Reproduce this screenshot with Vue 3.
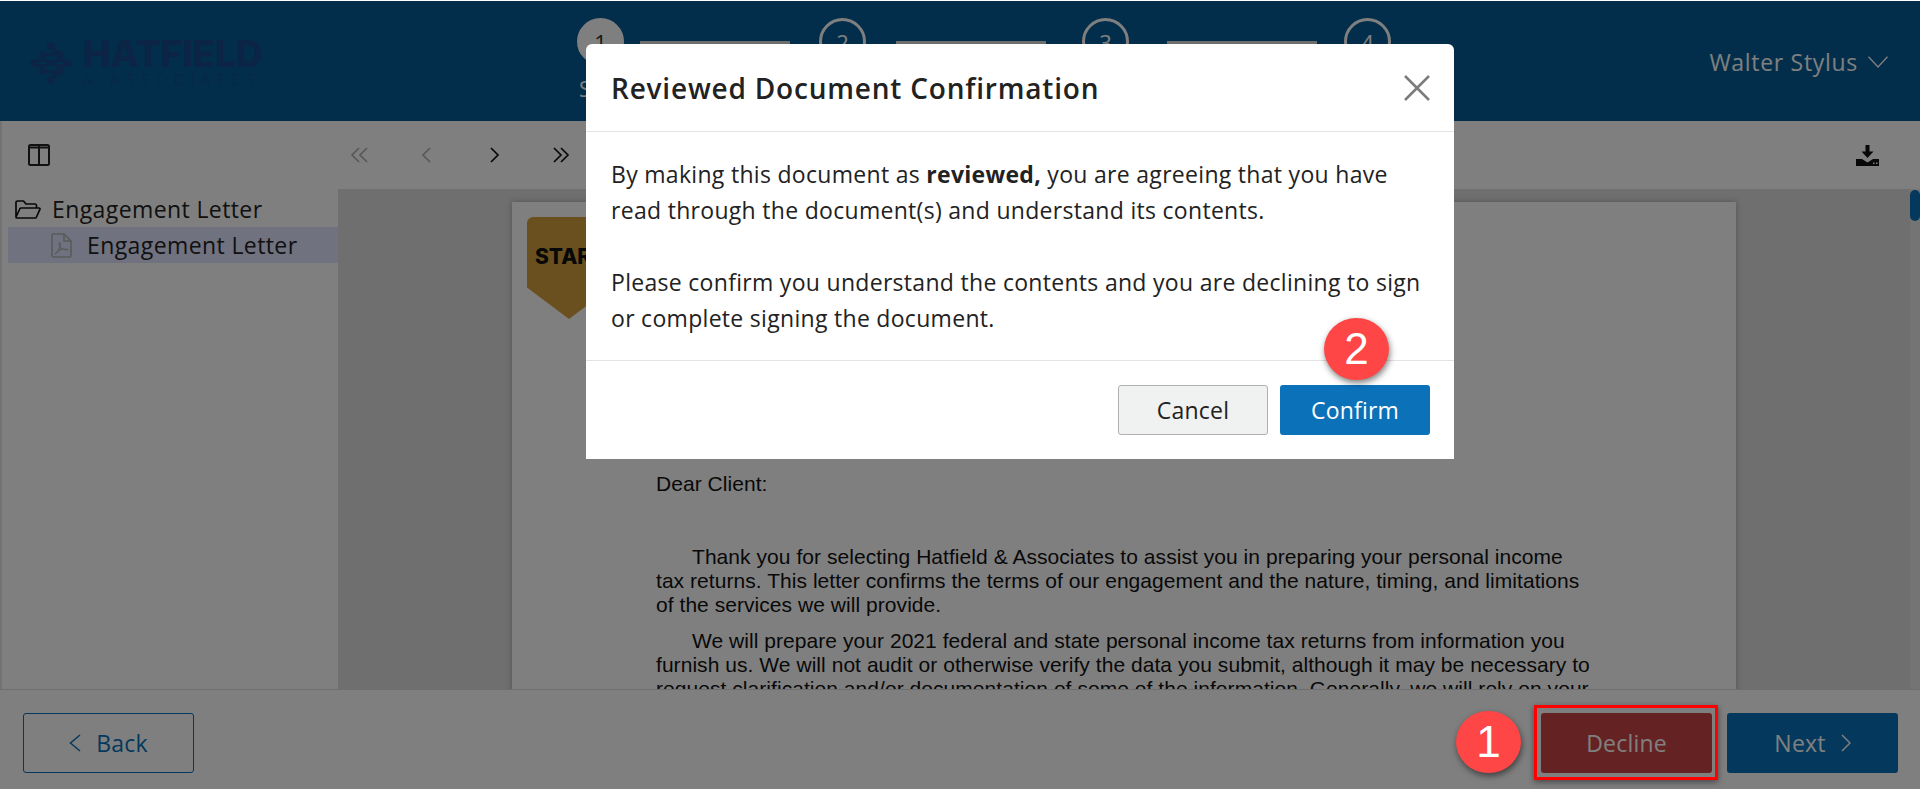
<script setup>
const paragraphs = [
  { lines: ['Thank you for selecting Hatfield & Associates to assist you in preparing your personal income', 'tax returns. This letter confirms the terms of our engagement and the nature, timing, and limitations', 'of the services we will provide.'] },
  { lines: ['We will prepare your 2021 federal and state personal income tax returns from information you', 'furnish us. We will not audit or otherwise verify the data you submit, although it may be necessary to', 'request clarification and/or documentation of some of the information. Generally, we will rely on your'] }
]
</script>

<template>
  <div class="app">
    <header class="header">
      <div class="logo">
        <svg class="logo-mark" viewBox="0 0 42 42" width="42" height="42" fill="none" stroke="#18488a" stroke-width="3" stroke-linecap="round">
          <path d="M21 4C21 9 30 8 30 13M13 13C18 13 24 10 30 13M4 21C10 16 15 18 21 21C27 24 32 26 38 21M4 21C10 26 15 24 21 21C27 18 32 16 38 21M13 29C18 29 24 32 30 29M21 38C21 33 30 34 30 29" />
          <g fill="#18488a" stroke="none">
            <circle cx="21" cy="4" r="3.800" /><circle cx="21" cy="38" r="3.800" /><circle cx="13" cy="13" r="3.800" /><circle cx="30" cy="13" r="3.800" />
            <circle cx="13" cy="29" r="3.800" /><circle cx="30" cy="29" r="3.800" /><circle cx="4" cy="21" r="3.800" /><circle cx="38" cy="21" r="3.800" />
          </g>
        </svg>
        <div class="logo-text">
          <div class="logo-name">HATFIELD</div>
          <div class="logo-sub">&amp; ASSOCIATES</div>
        </div>
      </div>
      <div class="steps">
        <div class="step active"><span class="dot">1</span><span class="step-label">Sign</span></div>
        <span class="bar bar-a"></span>
        <div class="step"><span class="dot">2</span></div>
        <span class="bar bar-b"></span>
        <div class="step"><span class="dot">3</span></div>
        <span class="bar bar-c"></span>
        <div class="step"><span class="dot">4</span></div>
      </div>
      <div class="user">
        <span>Walter Stylus</span>
        <svg width="20" height="12" viewBox="0 0 20 12" fill="none" stroke="#fff" stroke-width="1.300"><path d="M.5 .8 10 11 19.500 .8" /></svg>
      </div>
    </header>

    <div class="toolbar">
      <svg class="panel-icon" width="22" height="22" viewBox="0 0 22 22" fill="none" stroke="#222" stroke-width="2"><rect x="1" y="1" width="20" height="20" rx="1.500" /><path d="M11 1V21M1 3.500H21" /></svg>
      <div class="pager">
        <svg class="off" width="20" height="16" viewBox="0 0 20 16" fill="none" stroke="#222" stroke-width="1.700"><path d="M9 1 2 8l7 7M17 1l-7 7 7 7" /></svg>
        <svg class="off" width="20" height="16" viewBox="0 0 20 16" fill="none" stroke="#222" stroke-width="1.700"><path d="M13 1 6 8l7 7" /></svg>
        <svg width="20" height="16" viewBox="0 0 20 16" fill="none" stroke="#111" stroke-width="1.700"><path d="m7 1 7 7-7 7" /></svg>
        <svg width="20" height="16" viewBox="0 0 20 16" fill="none" stroke="#111" stroke-width="1.700"><path d="m3 1 7 7-7 7M10 1l7 7-7 7" /></svg>
      </div>
      <svg class="download" width="23" height="21" viewBox="0 0 23 21" fill="#111"><path d="M9.500 0h4v6.500h4L11.500 13 5.500 6.500h4z" /><path fill-rule="evenodd" d="M0 14h6l5.500 3.500L17 14h6v7H0zM17 17.500v1.500h1.500v-1.500zM20 17.500v1.500h1.500v-1.500z" /></svg>
    </div>

    <div class="workspace">
      <aside class="tree">
        <div class="tree-row">
          <svg width="26" height="19" viewBox="0 0 26 19" fill="none" stroke="#111" stroke-width="1.700" stroke-linejoin="round"><path d="M1 17V2.500C1 1.600 1.600 1 2.500 1h6l2.500 3h9c.8 0 1.500.7 1.500 1.500V8M1 17 5 8.500C5.300 8 5.800 8 6.200 8H24c.8 0 1.200.6.900 1.300L21.500 17c-.2.500-.7 1-1.300 1H2c-.6 0-1-.4-1-1z" /></svg>
          <span>Engagement Letter</span>
        </div>
        <div class="tree-row selected">
          <svg width="21" height="25" viewBox="0 0 21 25" fill="none" stroke="#b4b4b4" stroke-width="1.600"><path d="M1 2.500C1 1.600 1.600 1 2.500 1H13l7 7v14.500c0 .8-.7 1.500-1.500 1.500h-16C1.600 24 1 23.300 1 22.500zM13 1v7h7" /><path d="M4 21c3-1 6-8 5-11-1-1-1 2 0 4s5 3 7 3 0-1-3-1-7 3-9 5z" stroke-width="1.200" /></svg>
          <span>Engagement Letter</span>
        </div>
      </aside>
      <main class="viewer">
        <article class="page">
          <div class="tag">START</div>
          <p class="dear">Dear Client:</p>
          <div v-for="(para, i) in paragraphs" :key="i" class="para">
            <div v-for="(line, j) in para.lines" :key="j" :class="{ indent: j === 0 }">{{ line }}</div>
          </div>
        </article>
        <div class="scrollbar"><span class="thumb"></span></div>
      </main>
    </div>

    <footer class="footer">
      <button class="btn back">
        <svg width="12" height="18" viewBox="0 0 12 18" fill="none" stroke="currentColor" stroke-width="1.500"><path d="M11 1 1.500 9 11 17" /></svg>
        Back
      </button>
      <div class="footer-right">
        <button class="btn decline">Decline</button>
        <button class="btn next">
          Next
          <svg width="10" height="18" viewBox="0 0 10 18" fill="none" stroke="currentColor" stroke-width="1.500"><path d="m1 1 8 8-8 8" /></svg>
        </button>
      </div>
    </footer>

    <div class="overlay">
      <section class="modal">
        <div class="modal-head">
          <h2>Reviewed Document Confirmation</h2>
          <svg width="26" height="26" viewBox="0 0 26 26" fill="none" stroke="#7c7c7c" stroke-width="2.500"><path d="M1 1 25 25M25 1 1 25" /></svg>
        </div>
        <div class="modal-body">
          <p>By making this document as <strong>reviewed,</strong> you are agreeing that you have read through the document(s) and understand its contents.</p>
          <p>Please confirm you understand the contents and you are declining to sign or complete signing the document.</p>
        </div>
        <div class="modal-foot">
          <button class="btn cancel">Cancel</button>
          <button class="btn confirm">Confirm</button>
        </div>
      </section>
    </div>

    <div class="highlight"></div>
    <div class="badge badge-one">1</div>
    <div class="badge badge-two">2</div>
  </div>
</template>

<style>
html, body { margin: 0; background: #fff; overflow: hidden; }
</style>

<style scoped>
.app {
  position: relative;
  display: flex;
  flex-direction: column;
  height: 788px;
  padding-top: 1px;
  overflow: hidden;
  font-family: "Open Sans", "Noto Sans", sans-serif;
  color: #222;
}
.header {
  position: relative;
  display: flex;
  align-items: flex-start;
  height: 120px;
  background: #045c96;
  color: #fff;
  flex: none;
}
.logo { display: flex; gap: 11px; margin: 38px 0 0 30px; }
.logo-mark { margin-top: 3px; }
.logo-text { width: 180px; }
.logo-name { font: 800 37px/29px "Inter", sans-serif; color: #18488a; letter-spacing: -.1px; white-space: nowrap; }
.logo-sub { font: 300 15px/16px "Lato", sans-serif; color: #18488a; letter-spacing: 6.5px; margin-top: 3px; white-space: nowrap; }
.steps { display: flex; align-items: flex-start; margin: 17px 0 0 314px; }
.step { position: relative; display: flex; flex-direction: column; align-items: center; width: 47px; }
.dot {
  box-sizing: border-box;
  width: 47px;
  height: 47px;
  border: 3px solid #fff;
  border-radius: 50%;
  display: flex;
  align-items: center;
  justify-content: center;
  font-size: 22px;
}
.active .dot { background: #fff; color: #333; }
.step-label { position: absolute; top: 55px; font-size: 22px; line-height: 30px; white-space: nowrap; }
.bar { width: 150px; height: 6px; background: #ddd; margin-top: 23px; }
.bar-a { margin-left: 16px; margin-right: 29px; }
.bar-b { margin-left: 30px; margin-right: 36px; }
.bar-c { margin-left: 38px; margin-right: 27px; }
.user {
  margin: 47px 32px 0 auto;
  display: flex;
  align-items: center;
  gap: 10px;
  font-size: 23px;
  letter-spacing: .7px;
  line-height: 28px;
}
.toolbar {
  display: flex;
  align-items: center;
  height: 68px;
  background: #fff;
  flex: none;
  padding: 0 41px 0 26px;
  border-left: 2px solid #e6e6e6;
}
.pager { display: flex; gap: 47px; margin-left: 300px; }
.off { opacity: .35; }
.download { margin-left: auto; }
.workspace { display: flex; height: 500px; flex: none; }
.tree { width: 338px; background: #fff; padding-top: 2px; box-sizing: border-box; flex: none; border-left: 2px solid #e6e6e6; }
.tree-row { display: flex; align-items: center; gap: 11px; height: 36px; padding-left: 13px; font-size: 23px; letter-spacing: .4px; white-space: nowrap; }
.selected { background: #e2e4fe; margin-left: 6px; padding-left: 43px; gap: 15px; }
.viewer { position: relative; flex: 1; background: #dedede; overflow: hidden; }
.page {
  box-sizing: border-box;
  width: 1224px;
  height: 640px;
  margin: 13px 0 0 174px;
  padding: 0 0 0 144px;
  background: #fff;
  box-shadow: 0 0 6px rgba(0,0,0,.25);
  position: relative;
  font: 21px/24px "Liberation Sans", sans-serif;
  letter-spacing: .05px;
  color: #111;
  white-space: nowrap;
}
.tag {
  position: absolute;
  left: 15px;
  top: 15px;
  width: 84px;
  height: 102px;
  background: #d4a03c;
  border-radius: 6px 6px 0 0;
  clip-path: polygon(0 0, 100% 0, 100% 69%, 50% 100%, 0 69%);
  font: 800 21px/80px "Inter", sans-serif;
  letter-spacing: 0;
  color: #111;
  padding-left: 8px;
  box-sizing: border-box;
}
.dear { margin: 0; padding-top: 270px; }
.para { margin-top: 12px; }
.dear + .para { margin-top: 49px; }
.indent { padding-left: 36px; }
.scrollbar { position: absolute; top: 0; right: 0; bottom: 0; width: 10px; background: #e8e8e8; }
.thumb { display: block; width: 10px; height: 31px; margin-top: 1px; border-radius: 5px; background: #0872ba; }
.footer {
  position: relative;
  display: flex;
  align-items: flex-start;
  justify-content: space-between;
  flex: 1;
  background: #fff;
  padding: 23px 22px 0 23px;
  border-top: 1px solid #ddd;
}
.footer-right { display: flex; gap: 15px; }
.btn {
  box-sizing: border-box;
  width: 171px;
  height: 60px;
  border: 1px solid transparent;
  border-radius: 3px;
  font: 400 23px "Open Sans", sans-serif;
  letter-spacing: .2px;
  display: flex;
  align-items: center;
  justify-content: center;
  gap: 15px;
  padding: 0;
}
.back { background: #fff; border-color: #0872ba; color: #0872ba; }
.decline { background: #cb4444; color: #fff; }
.next { background: #0872ba; color: #fff; }
.overlay { position: absolute; inset: 1px 0 0; background: rgba(0,0,0,.5); }
.modal {
  position: absolute;
  left: 586px;
  top: 43px;
  width: 868px;
  background: #fff;
  border-radius: 6px 6px 0 0;
  box-sizing: border-box;
}
.modal-head {
  display: flex;
  align-items: center;
  justify-content: space-between;
  height: 88px;
  padding: 0 24px 0 25px;
  border-bottom: 1px solid #e3e3e3;
  box-sizing: border-box;
}
.modal-head h2 { margin: 0; font: 600 28px "Open Sans", sans-serif; letter-spacing: .8px; color: #222; }
.modal-body { padding: 24px 25px 0; height: 229px; box-sizing: border-box; font-size: 23px; letter-spacing: .3px; line-height: 36px; color: #222; border-bottom: 1px solid #e3e3e3; }
.modal-body p { margin: 0 0 36px; }
.modal-foot { display: flex; justify-content: flex-end; gap: 12px; padding: 24px; }
.modal-foot .btn { width: 150px; height: 50px; }
.cancel { background: #f0f1f1; border-color: #b0b0b0; color: #222; }
.confirm { background: #0b72b9; color: #fff; }
.highlight {
  position: absolute;
  left: 1534px;
  top: 705px;
  width: 184px;
  height: 75px;
  box-sizing: border-box;
  border: 3px solid #f00;
  box-shadow: 0 2px 6px rgba(0,0,0,.45);
}
.badge {
  position: absolute;
  box-sizing: border-box;
  width: 65px;
  height: 62px;
  border-radius: 50%;
  background: #ff4646;
  color: #fff;
  display: flex;
  align-items: center;
  justify-content: center;
  font: 400 44px "Liberation Sans", sans-serif;
  box-shadow: 1px 3px 6px rgba(0,0,0,.5);
}
.badge-one { left: 1456px; top: 711px; }
.badge-two { left: 1324px; top: 318px; }
</style>
